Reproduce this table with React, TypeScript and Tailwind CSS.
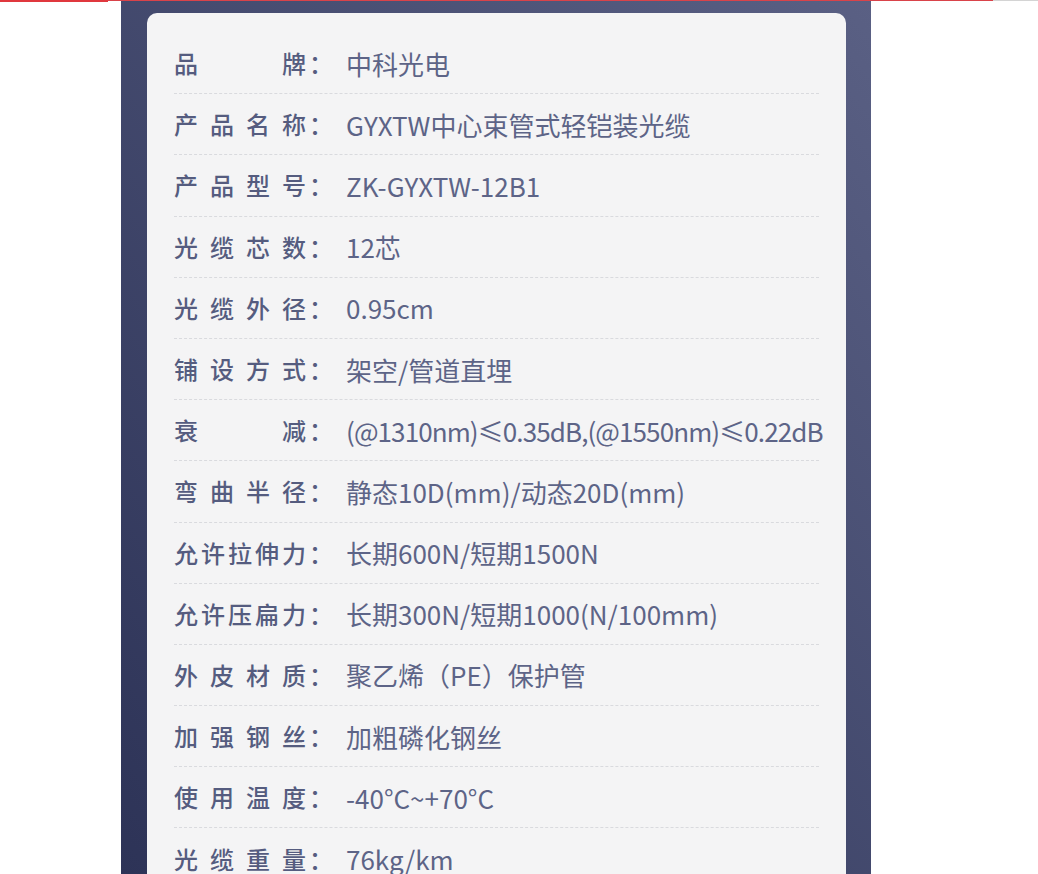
import React from 'react';

// 光缆参数表
const SPECS: { label: string; value: string; tight?: boolean }[] = [
  { label: '品牌', value: '中科光电' },
  { label: '产品名称', value: 'GYXTW中心束管式轻铠装光缆' },
  { label: '产品型号', value: 'ZK-GYXTW-12B1' },
  { label: '光缆芯数', value: '12芯' },
  { label: '光缆外径', value: '0.95cm' },
  { label: '铺设方式', value: '架空/管道直埋' },
  { label: '衰减', value: '(@1310nm)≤0.35dB,(@1550nm)≤0.22dB', tight: true },
  { label: '弯曲半径', value: '静态10D(mm)/动态20D(mm)' },
  { label: '允许拉伸力', value: '长期600N/短期1500N' },
  { label: '允许压扁力', value: '长期300N/短期1000(N/100mm)' },
  { label: '外皮材质', value: '聚乙烯（PE）保护管' },
  { label: '加强钢丝', value: '加粗磷化钢丝' },
  { label: '使用温度', value: '-40°C~+70°C' },
  { label: '光缆重量', value: '76kg/km' },
];

export default function App() {
  return (
    <div
      className="relative h-[874px] w-full overflow-hidden bg-white"
      style={{ fontFamily: '"Noto Sans CJK SC", "Noto Sans", sans-serif' }}
    >
      {/* 顶部加载条 */}
      <div className="absolute top-0 left-0 right-0 z-10 flex">
        <div className="h-[2px] w-[108px] bg-[#e0383e]" />
        <div className="h-px w-[885px] bg-[#d9434a]" />
        <div className="h-px flex-1 bg-[#d4d4d4]" />
      </div>

      <div className="ml-[121px] h-full w-[750px] bg-gradient-to-tr from-[#2d3357] to-[#5a6084] pt-[13px] pl-[26px]">
        <div className="w-[699px] rounded-[10px] bg-[#f4f4f5] px-[27px] pt-[20px] pb-4">
          {SPECS.map((s) => (
            <div
              key={s.label}
              className="flex h-[61.2px] items-center border-b border-dashed border-[#d9dade]"
            >
              <span className="flex shrink-0 items-center text-[24px] font-medium text-[#555c7f]">
                <span className="w-[132px] text-justify [text-align-last:justify]">{s.label}</span>
                <span className="ml-[3px]">：</span>
              </span>
              <span
                className={`ml-[13px] whitespace-nowrap text-[26px] text-[#5d6487] ${
                  s.tight ? 'tracking-[-0.9px]' : ''
                }`}
              >
                {s.value}
              </span>
            </div>
          ))}
        </div>
      </div>
    </div>
  );
}
